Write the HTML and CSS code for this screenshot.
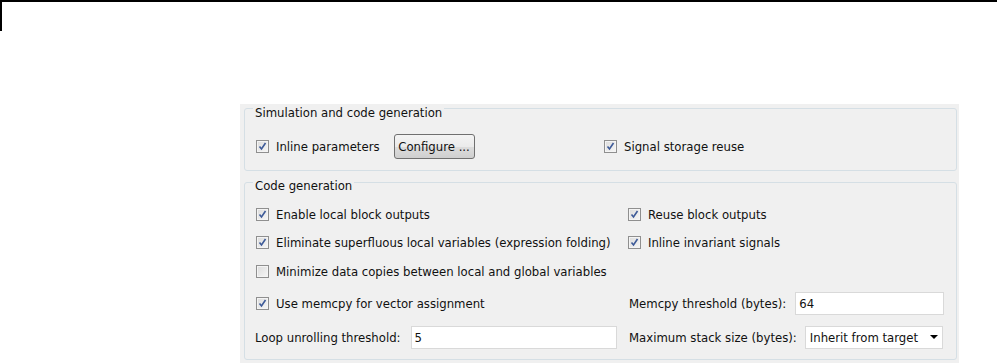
FILE: index.html
```html
<!DOCTYPE html>
<html lang="en">
<head>
  <meta charset="UTF-8" />
  <title>Optimization settings</title>
  <link rel="stylesheet" href="styles.css">
</head>
<body>
  <div class="corner"></div>

  <div class="panel">
    <div class="group group-sim">
      <div class="group-title">Simulation and code generation</div>
      <div class="row">
        <div class="cell">
          <label class="check"><span class="box on"></span>Inline parameters</label>
          <button class="btn">Configure ...</button>
        </div>
        <div class="cell">
          <label class="check"><span class="box on"></span>Signal storage reuse</label>
        </div>
      </div>
    </div>

    <div class="group group-code">
      <div class="group-title">Code generation</div>
      <div class="row r1">
        <label class="check"><span class="box on"></span>Enable local block outputs</label>
        <label class="check"><span class="box on"></span>Reuse block outputs</label>
      </div>
      <div class="row r2">
        <label class="check"><span class="box on"></span>Eliminate superfluous local variables (expression folding)</label>
        <label class="check"><span class="box on"></span>Inline invariant signals</label>
      </div>
      <div class="row r3">
        <label class="check"><span class="box"></span>Minimize data copies between local and global variables</label>
      </div>
      <div class="row r4">
        <label class="check"><span class="box on"></span>Use memcpy for vector assignment</label>
        <div class="field">
          <span>Memcpy threshold (bytes):</span>
          <input class="text memcpy" type="text" value="64">
        </div>
      </div>
      <div class="row r5">
        <div class="field">
          <span>Loop unrolling threshold:</span>
          <input class="text loop" type="text" value="5">
        </div>
        <div class="field">
          <span>Maximum stack size (bytes):</span>
          <div class="select">Inherit from target<span class="arrow"></span></div>
        </div>
      </div>
    </div>
  </div>
</body>
</html>
```

FILE: styles.css
```css
body {
  margin: 0;
  background: #fff;
  font-family: "DejaVu Sans", sans-serif;
  font-stretch: condensed;
  font-size: 13px;
  color: #111;
  overflow: hidden;
}

.corner {
  height: 29px;
  border-top: 2px solid #000;
  border-left: 2px solid #000;
}

.panel {
  box-sizing: border-box;
  margin: 73px 0 0 240px;
  width: 719px;
  height: 259px;
  padding: 4px 2px 0 4px;
  background: #f0f0f0;
}

.group {
  border: 1px solid #d5dfe5;
  border-radius: 3px;
  padding: 0 10px;
}

.group-title {
  display: table;
  margin: -4px 0 0 -2px;
  padding: 0 2px;
  line-height: 15px;
  background: #f0f0f0;
}

.group-sim {
  padding-bottom: 11px;
}

.group-sim .row {
  margin-top: 14px;
  display: grid;
  grid-template-columns: 348px 1fr;
  align-items: center;
}

.group-sim .cell {
  display: flex;
  align-items: center;
  gap: 14px;
}

.group-code {
  margin-top: 11px;
  padding-bottom: 10px;
}

.group-code .group-title {
  margin-top: -5px;
}

.group-code .row {
  display: grid;
  grid-template-columns: 372px 1fr;
  align-items: center;
  height: 24px;
}

.r1 { margin-top: 9px; }
.r2 { margin-top: 4px; }
.r3 { margin-top: 5px; }
.r4 { margin-top: 8px; }
.r5 { margin-top: 10px; }

.check {
  display: flex;
  align-items: center;
  white-space: nowrap;
}

.box {
  width: 11px;
  height: 11px;
  margin: 0 7px 0 1px;
  border: 1px solid #8f8f8f;
  background: linear-gradient(135deg, #dcdcdc, #f6f6f6);
  box-shadow: inset 0 0 0 1px #f4f4f4;
  flex: none;
}

.box.on {
  background:
    url("data:image/svg+xml;utf8,<svg xmlns='http://www.w3.org/2000/svg' width='11' height='11'><path d='M2.5 5.5 L4.5 8 L8.5 2' fill='none' stroke='%233d5a98' stroke-width='1.6'/></svg>") center/11px 11px no-repeat,
    linear-gradient(135deg, #dcdcdc, #f6f6f6);
}

.btn {
  width: 81px;
  height: 25px;
  padding: 0;
  font: inherit;
  color: #111;
  border: 1px solid #707070;
  border-radius: 3px;
  background: linear-gradient(#f4f4f4 0%, #ebebeb 50%, #dddddd 51%, #cfcfcf 100%);
}

.field {
  display: flex;
  align-items: center;
  white-space: nowrap;
}

.row .field + .field,
.r4 .field {
  margin-left: 2px;
}

.text,
.select {
  box-sizing: border-box;
  height: 23px;
  border: 1px solid #d9d9d9;
  background: #fff;
  font: inherit;
  color: #111;
  padding: 0 3px;
}

.loop {
  width: 206px;
  margin-left: 10px;
}

.memcpy {
  width: 149px;
  margin-left: 9px;
}

.select {
  width: 138px;
  margin-left: 8px;
  display: flex;
  align-items: center;
  justify-content: space-between;
  padding: 0 4px 0 4px;
}

.arrow {
  width: 0;
  height: 0;
  border-left: 4px solid transparent;
  border-right: 4px solid transparent;
  border-top: 4px solid #000;
}
```
